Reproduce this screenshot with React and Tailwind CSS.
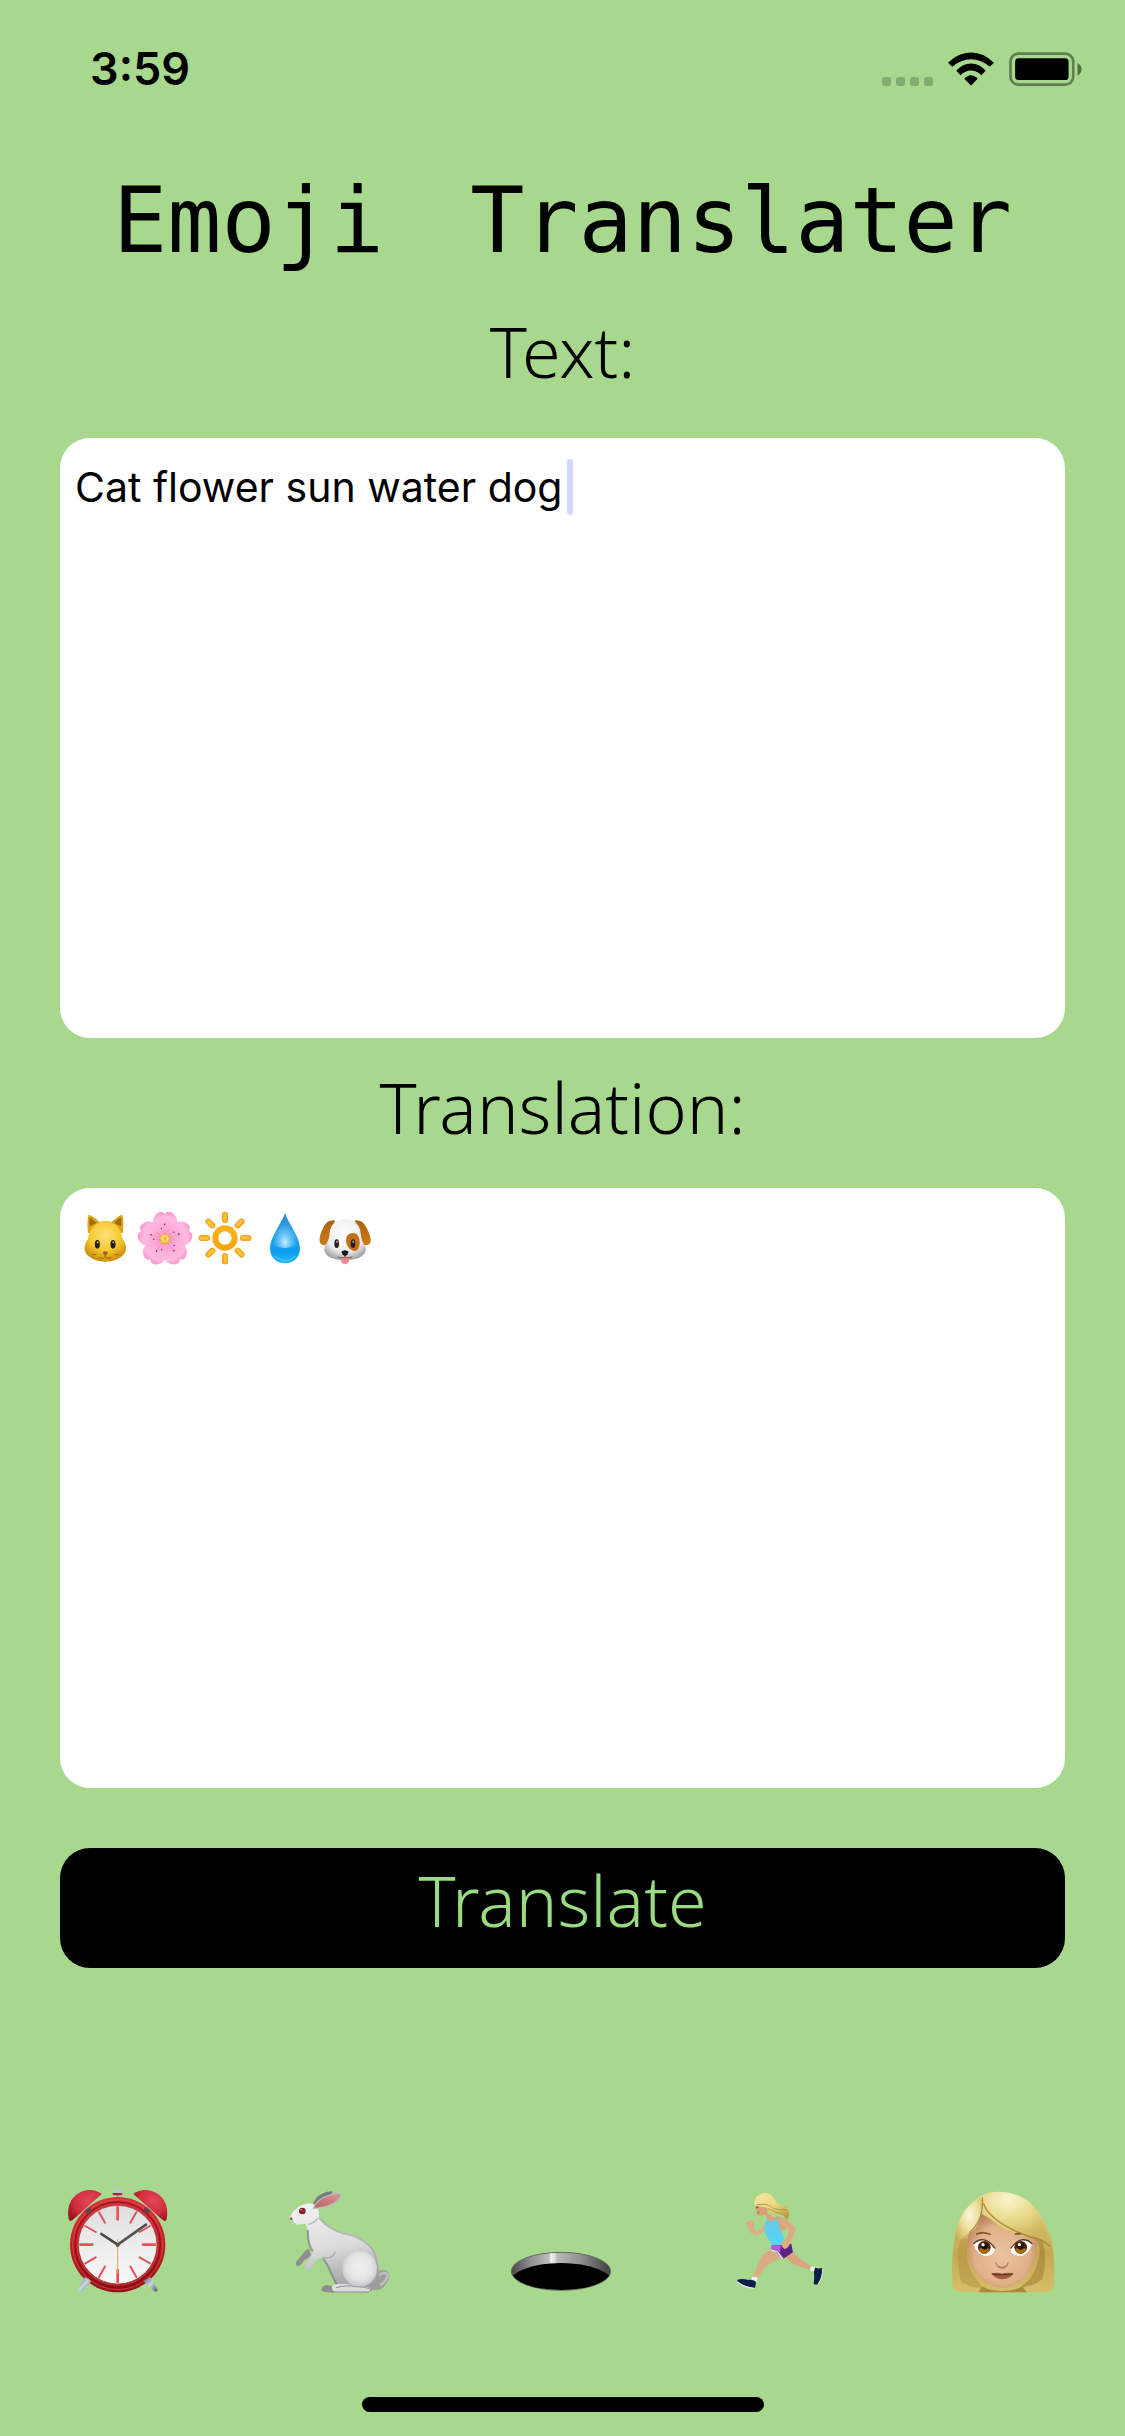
import React, { useState } from "react";

/* ---------- Status bar icons ---------- */

function SignalDots() {
  return (
    <svg viewBox="0 0 51 9" className="mt-6 h-[9px] w-[51px]" aria-hidden="true">
      {[0, 14, 28, 42].map((x) => (
        <rect key={x} x={x} width="9" height="9" rx="2.5" fill="#000" opacity="0.2" />
      ))}
    </svg>
  );
}

function Wifi() {
  return (
    <svg viewBox="264 65 138 101" className="h-[34px] w-[46px]" aria-hidden="true">
      <path d="M264 97 Q295 66 333 66 Q371 66 402 97 L389 109 Q364 86 333 86 Q302 86 277 109 Z" />
      <path d="M289 121 Q308 99 333 99 Q358 99 377 121 L364 134 Q350 120 333 120 Q316 120 302 134 Z" />
      <path d="M313 145 Q322 134 333 134 Q344 134 353 145 L333 165 Z" />
    </svg>
  );
}

function Battery() {
  return (
    <svg viewBox="447 65 220 103" className="h-[34px] w-[73px]" aria-hidden="true">
      <rect x="451" y="70" width="190" height="94" rx="24" fill="none" stroke="#000" strokeOpacity="0.42" strokeWidth="8" />
      <rect x="465" y="84" width="162" height="66" rx="11" />
      <path d="M654 98 Q666 104 666 117 Q666 130 654 136 Z" opacity="0.5" />
    </svg>
  );
}

/* ---------- Translated emoji ---------- */

function CatFace() {
  return (
    <svg viewBox="43 53 180 180" className="size-[60px]" role="img" aria-label="cat">
      <defs>
        <radialGradient id="catFur" cx="0.5" cy="0.35" r="0.65">
          <stop offset="0" stopColor="#ffe277" />
          <stop offset="0.6" stopColor="#f6c62c" />
          <stop offset="1" stopColor="#c98d0c" />
        </radialGradient>
      </defs>
      <path d="M86 199 L74 206 M88 204 L79 213 M181 199 L193 206 M179 204 L188 213" stroke="#d8d4c8" strokeWidth="2" />
      <path d="M82 128 Q78 92 84 73 Q100 78 116 95 Q133 90 153 95 Q169 78 185 73 Q191 95 186 128 Z" fill="#dba515" />
      <path d="M87 108 Q84 92 88 81 Q98 88 108 98 Z M181 108 Q184 92 180 81 Q170 88 160 98 Z" fill="#a36c08" />
      <path d="M134 93 C163 93 183 117 186 146 C201 166 199 190 181 199 Q165 213 134 214 Q103 213 87 199 C69 190 67 166 82 146 C85 117 105 93 134 93 Z" fill="url(#catFur)" />
      <path d="M121 203 Q134 193 147 203 Q141 213 134 213 Q127 213 121 203 Z" fill="#dca317" />
      <path d="M134 194 V200 M117 202 Q128 207 134 200 Q140 207 151 202 M95 193 H106 M162 193 H173" fill="none" stroke="#956006" strokeWidth="2.5" strokeLinecap="round" />
      <path d="M126 186 Q134 180 142 186 Q140 194 134 196 Q128 194 126 186 Z" fill="#85653a" />
      <ellipse cx="110" cy="162" rx="7.5" ry="13" fill="#221b16" />
      <ellipse cx="157" cy="162" rx="7.5" ry="13" fill="#221b16" />
      <circle cx="111" cy="156" r="3" fill="#b7b2aa" />
      <circle cx="158" cy="156" r="3" fill="#b7b2aa" />
    </svg>
  );
}

function Blossom() {
  return (
    <svg viewBox="223 53 180 180" className="size-[60px]" role="img" aria-label="flower">
      <defs>
        <radialGradient id="petal" gradientUnits="userSpaceOnUse" cx="313" cy="146" r="82">
          <stop offset="0" stopColor="#f07fb0" />
          <stop offset="0.3" stopColor="#fda6d2" />
          <stop offset="0.8" stopColor="#ffbbe1" />
          <stop offset="1" stopColor="#f995c8" />
        </radialGradient>
      </defs>
      {[0, 72, 144, 216, 288].map((a) => (
        <g key={a} transform={`rotate(${a} 313 146)`}>
          <path
            d="M313 146 C284 127 268 96 283 76 Q292 63 305 65 L312 71 L320 65 Q334 63 343 76 C358 96 342 127 313 146 Z"
            fill="url(#petal)"
            stroke="#f79ccc"
            strokeWidth="1"
          />
          <path d="M313 138 L312 104 M307 138 L303 116 M319 138 L323 116" stroke="#e06da2" strokeWidth="1" />
          <circle cx="312" cy="102" r="2.5" fill="#96204f" />
          <circle cx="302" cy="114" r="2" fill="#96204f" />
        </g>
      ))}
      <circle cx="313" cy="146" r="16" fill="#e7b63b" />
      <circle cx="313" cy="145" r="11" fill="#fbe27c" />
      <path d="M305 139 L321 152 M321 139 L305 152 M313 135 V156" stroke="#d69e2a" strokeWidth="2" />
    </svg>
  );
}

function Sun() {
  return (
    <svg viewBox="403 53 180 180" className="size-[60px]" role="img" aria-label="sun">
      <defs>
        <linearGradient id="sunRing" x1="0" y1="0" x2="0" y2="1">
          <stop offset="0" stopColor="#ffb217" />
          <stop offset="1" stopColor="#f6a50c" />
        </linearGradient>
      </defs>
      {[0, 45, 90, 135, 180, 225, 270, 315].map((a) => (
        <g key={a} transform={`rotate(${a} 493 143)`}>
          <rect x="484" y="64" width="18" height="34" rx="8" fill="#f7a021" />
          <rect x="488" y="68" width="9" height="27" rx="4" fill="#ffc530" />
        </g>
      ))}
      <circle cx="493" cy="143" r="29" fill="#fff" stroke="url(#sunRing)" strokeWidth="18" />
    </svg>
  );
}

function Droplet() {
  return (
    <svg viewBox="583 53 180 180" className="size-[60px]" role="img" aria-label="water">
      <defs>
        <linearGradient id="dropBody" x1="0" y1="0" x2="0" y2="1">
          <stop offset="0" stopColor="#2586c4" />
          <stop offset="0.4" stopColor="#36a9ea" />
          <stop offset="0.75" stopColor="#0b9cf0" />
          <stop offset="1" stopColor="#21b8f8" />
        </linearGradient>
        <radialGradient id="dropGlow" cx="0.5" cy="0.8" r="0.6">
          <stop offset="0" stopColor="#d4f3ff" stopOpacity="0.95" />
          <stop offset="1" stopColor="#6ccbf8" stopOpacity="0" />
        </radialGradient>
      </defs>
      <path d="M673 68 C679 92 718 139 718 174 C718 202 698 219 673 219 C648 219 628 202 628 174 C628 139 667 92 673 68 Z" fill="url(#dropBody)" />
      <path d="M673 84 C680 108 705 136 706 164 Q690 174 673 174 Q656 174 640 164 C641 136 666 108 673 84 Z" fill="url(#dropGlow)" />
      <path d="M642 197 Q658 211 673 211 Q688 211 704 197" fill="none" stroke="#59d3ff" strokeWidth="4" opacity="0.7" />
    </svg>
  );
}

function DogFace() {
  return (
    <svg viewBox="763 53 180 180" className="size-[60px]" role="img" aria-label="dog">
      <defs>
        <radialGradient id="dogFur" cx="0.5" cy="0.35" r="0.65">
          <stop offset="0" stopColor="#ffffff" />
          <stop offset="0.7" stopColor="#ececec" />
          <stop offset="1" stopColor="#a9a8a8" />
        </radialGradient>
        <linearGradient id="dogEar" x1="0" y1="0" x2="0" y2="1">
          <stop offset="0" stopColor="#a9610d" />
          <stop offset="1" stopColor="#cf7d17" />
        </linearGradient>
      </defs>
      <path d="M822 90 Q800 88 790 108 Q774 138 777 155 Q780 165 795 165 Q812 158 820 118 Z" fill="url(#dogEar)" />
      <path d="M883 90 Q905 88 915 108 Q932 138 930 155 Q926 165 912 165 Q893 158 886 118 Z" fill="url(#dogEar)" />
      <path d="M853 87 C884 87 899 104 901 136 C903 158 917 164 915 181 Q907 209 853 209 Q799 209 791 181 C789 164 803 158 806 136 C808 104 822 87 853 87 Z" fill="url(#dogFur)" />
      <path d="M875 128 C891 127 898 142 897 161 C896 175 888 183 880 182 C866 179 856 163 856 151 C856 137 864 129 875 128 Z" fill="#c27016" />
      <ellipse cx="828" cy="160" rx="7" ry="13" fill="#26201f" />
      <ellipse cx="877" cy="160" rx="7" ry="13" fill="#26201f" />
      <circle cx="829" cy="154" r="3" fill="#b3b0ae" />
      <circle cx="878" cy="154" r="3" fill="#b3b0ae" />
      <path d="M840 203 Q853 198 866 203 Q867 221 853 222 Q839 221 840 203 Z" fill="#f48c98" />
      <path d="M853 203 V215" stroke="#d86878" strokeWidth="2" />
      <path d="M853 192 V200 M832 200 Q846 206 853 199 Q860 206 874 200" fill="none" stroke="#6b5a55" strokeWidth="3" strokeLinecap="round" />
      <path d="M842 184 Q853 175 864 184 Q862 194 853 197 Q844 194 842 184 Z" fill="#151212" />
    </svg>
  );
}

/* ---------- Bottom row emoji ---------- */

function AlarmClock() {
  return (
    <svg viewBox="30 45 342 342" className="size-[114px]" aria-hidden="true">
      <defs>
        <radialGradient id="bell" cx="0.6" cy="0.35" r="0.7">
          <stop offset="0" stopColor="#e4485a" />
          <stop offset="0.6" stopColor="#d02c3c" />
          <stop offset="1" stopColor="#a01520" />
        </radialGradient>
        <linearGradient id="rim" x1="0" y1="0" x2="0" y2="1">
          <stop offset="0" stopColor="#d8343c" />
          <stop offset="0.5" stopColor="#c21f26" />
          <stop offset="1" stopColor="#8f1216" />
        </linearGradient>
        <linearGradient id="dial" x1="0" y1="0" x2="0" y2="1">
          <stop offset="0" stopColor="#dedede" />
          <stop offset="0.5" stopColor="#ececec" />
          <stop offset="1" stopColor="#f8f8f8" />
        </linearGradient>
        <linearGradient id="steel" x1="0" y1="0" x2="1" y2="1">
          <stop offset="0" stopColor="#585d66" />
          <stop offset="0.5" stopColor="#ccd5e4" />
          <stop offset="1" stopColor="#4c515b" />
        </linearGradient>
      </defs>
      <path d="M71 74 L84 70 L86 80 L76 84 Z M333 74 L320 70 L318 80 L328 84 Z" fill="#a9b9d3" />
      <path d="M203 72 V98" stroke="#9aa2b0" strokeWidth="5" />
      <rect x="188" y="66" width="29" height="10" rx="4" fill="#b3202c" />
      <rect x="184" y="60" width="37" height="9" rx="4" fill="#b9c4da" />
      <circle cx="203" cy="224" r="143" fill="url(#rim)" />
      <circle cx="203" cy="224" r="135" fill="none" stroke="#e5555a" strokeWidth="3" opacity="0.6" />
      <circle cx="203" cy="224" r="128" fill="none" stroke="#82090f" strokeWidth="4" opacity="0.7" />
      <circle cx="203" cy="224" r="121" fill="none" stroke="#d23a40" strokeWidth="4" opacity="0.8" />
      <circle cx="203" cy="224" r="118" fill="url(#dial)" stroke="#8f2e31" strokeWidth="2" />
      {[0, 30, 60, 90, 120, 150, 180, 210, 240, 270, 300, 330].map((a) => (
        <path
          key={a}
          d="M203 112 V148"
          transform={`rotate(${a} 203 224)`}
          stroke="#e8505a"
          strokeWidth={a % 90 === 0 ? 8 : 6}
          strokeLinecap="round"
        />
      ))}
      <path d="M203 206 V310" stroke="#dfae62" strokeWidth="3" />
      <path d="M203 224 L154 192" stroke="#444748" strokeWidth="8" strokeLinecap="round" />
      <path d="M203 224 L288 164" stroke="#505455" strokeWidth="8" strokeLinecap="round" />
      <circle cx="203" cy="225" r="6" fill="#5e5342" />
      <path d="M124 118 L108 126 M282 118 L298 126" stroke="#5e4550" strokeWidth="12" />
      <path d="M155 72 C125 49 83 61 64 91 Q50 116 56 147 Q58 157 68 150 Z" fill="url(#bell)" />
      <path d="M250 72 C280 49 322 61 342 91 Q356 116 350 147 Q348 157 338 150 Z" fill="url(#bell)" />
      <path d="M105 320 L124 334 L94 364 Q86 368 83 359 Z" fill="url(#steel)" />
      <path d="M300 320 L281 334 L312 363 Q320 369 323 359 Z" fill="url(#steel)" />
    </svg>
  );
}

function Rabbit() {
  return (
    <svg viewBox="694 45 342 342" className="size-[114px]" aria-hidden="true">
      <defs>
        <linearGradient id="rabbitFur" x1="0.3" y1="0" x2="0.5" y2="1">
          <stop offset="0" stopColor="#f1f1f1" />
          <stop offset="0.5" stopColor="#dcdcdd" />
          <stop offset="1" stopColor="#9c9c9e" />
        </linearGradient>
        <radialGradient id="rabbitThigh" cx="0.5" cy="0.45" r="0.6">
          <stop offset="0" stopColor="#f2f2f2" />
          <stop offset="0.6" stopColor="#e4e4e5" />
          <stop offset="1" stopColor="#c0c0c3" />
        </radialGradient>
        <linearGradient id="rabbitEar" x1="0" y1="1" x2="1" y2="0">
          <stop offset="0" stopColor="#b6656b" />
          <stop offset="1" stopColor="#dc9293" />
        </linearGradient>
      </defs>
      <path d="M789 108 Q794 82 820 70 Q837 62 849 64 Q848 76 826 92 Z" fill="#777a7c" />
      <path d="M984 305 Q1002 293 1016 305 Q1024 321 1009 343 Q992 365 968 360 Q955 355 970 335 Z" fill="#9d9d9f" />
      <path d="M990 315 Q1004 303 1014 314 Q1011 333 994 344" fill="none" stroke="#ccc" strokeWidth="8" strokeLinecap="round" opacity="0.7" />
      <path d="M778 236 Q767 239 759 252 L739 276 Q736 287 746 289 Q754 287 763 271 L785 258 Z" fill="#8f8f91" />
      <path d="M829 345 Q813 349 816 362 Q820 368 855 367 L860 350 Z" fill="#8d8d8f" />
      <path d="M721 142 C731 117 755 99 786 101 Q804 104 807 122 L808 143 C829 166 852 181 881 188 C928 196 965 220 978 252 C992 289 991 331 974 355 L960 367 L852 366 Q841 357 852 345 L860 342 C845 318 839 289 819 265 C804 260 795 274 788 290 Q780 302 768 297 Q762 289 772 276 L789 245 C776 226 776 205 774 186 Q773 169 766 162 L739 164 Q723 160 721 142 Z" fill="url(#rabbitFur)" />
      <path d="M774 180 C776 207 776 228 790 244 M820 266 C841 289 845 319 861 343" fill="none" stroke="#6e6e71" strokeWidth="6" opacity="0.6" />
      <path d="M819 263 Q850 268 857 245" fill="none" stroke="#a8a8aa" strokeWidth="4" />
      <path d="M775 163 Q791 162 806 144" fill="none" stroke="#bababd" strokeWidth="5" />
      <path d="M810 146 C829 168 852 183 881 190 C928 198 963 222 976 254 C988 289 988 331 972 354" fill="none" stroke="#9b9b9e" strokeWidth="5" opacity="0.6" />
      <ellipse cx="930" cy="296" rx="52" ry="54" fill="url(#rabbitThigh)" />
      <path d="M850 344 Q883 337 918 348 Q949 348 961 354 L959 367 H854 Q841 357 850 344 Z" fill="#dcdcde" />
      <path d="M859 353 Q893 344 918 350 Q944 350 959 356" fill="none" stroke="#929295" strokeWidth="3" />
      <path d="M844 366 H958" stroke="#8c8c90" strokeWidth="3" />
      <path d="M789 117 C795 91 825 71 872 69 Q880 76 868 91 C850 108 818 117 789 117 Z" fill="#bdb8ba" />
      <path d="M794 113 C802 91 832 74 870 72 Q875 79 862 90 C844 106 816 112 794 113 Z" fill="url(#rabbitEar)" />
      <circle cx="758" cy="123" r="10" fill="#6b2424" />
      <circle cx="759" cy="122" r="6" fill="#a92a2a" />
      <circle cx="754" cy="118" r="2" fill="#fff" />
      <path d="M720 144 Q722 153 729 151 L727 142 Z" fill="#8e5158" />
      <path d="M729 151 Q728 161 740 163" fill="none" stroke="#999" strokeWidth="2" />
    </svg>
  );
}

function Hole() {
  return (
    <svg viewBox="38 45 342 342" className="size-[114px]" aria-hidden="true">
      <defs>
        <linearGradient id="holeWall" x1="0" y1="0" x2="1" y2="0">
          <stop offset="0" stopColor="#484848" />
          <stop offset="0.2" stopColor="#929292" />
          <stop offset="0.38" stopColor="#bdbdbd" />
          <stop offset="0.4" stopColor="#f1f1f1" />
          <stop offset="0.44" stopColor="#dcdcdc" />
          <stop offset="0.46" stopColor="#b9b9b9" />
          <stop offset="0.7" stopColor="#909090" />
          <stop offset="1" stopColor="#3d3d3d" />
        </linearGradient>
        <clipPath id="holeEdge">
          <ellipse cx="212" cy="304" rx="148" ry="56" />
        </clipPath>
      </defs>
      <ellipse cx="212" cy="304" rx="149" ry="57" fill="url(#holeWall)" stroke="#646b60" strokeWidth="3" />
      <ellipse cx="212" cy="342" rx="158" ry="63" fill="#000" clipPath="url(#holeEdge)" />
    </svg>
  );
}

function Runner() {
  return (
    <svg viewBox="701 45 342 342" className="size-[114px]" aria-hidden="true">
      <defs>
        <linearGradient id="runnerHair" x1="0" y1="0" x2="1" y2="1">
          <stop offset="0" stopColor="#f7e9a0" />
          <stop offset="0.5" stopColor="#ecd883" />
          <stop offset="1" stopColor="#b18b36" />
        </linearGradient>
        <linearGradient id="runnerSkin" x1="0" y1="0" x2="0" y2="1">
          <stop offset="0" stopColor="#dba880" />
          <stop offset="1" stopColor="#dfae85" />
        </linearGradient>
        <linearGradient id="runnerTop" x1="0" y1="0" x2="0" y2="1">
          <stop offset="0" stopColor="#66c9e6" />
          <stop offset="1" stopColor="#55d5f6" />
        </linearGradient>
      </defs>
      <path d="M885 258 L912 250 Q927 268 963 289 L969 300 Q929 292 907 282 Q893 272 885 258 Z" fill="#d9a57c" />
      <path d="M840 239 Q813 252 803 282 Q797 302 785 323 L800 328 Q816 306 823 291 Q845 279 872 261 Z" fill="url(#runnerSkin)" />
      <path d="M959 292 L974 289 L973 304 L962 304 Z M785 320 L802 322 L799 336 L784 332 Z" fill="#f4eff0" />
      <path d="M974 293 Q984 297 997 294 Q997 320 982 344 L970 343 Q973 326 971 306 Z" fill="#0c1d4c" />
      <path d="M997 295 Q998 323 982 344" fill="none" stroke="#e8e8ef" strokeWidth="3" />
      <path d="M741 329 Q756 325 774 330 Q787 327 797 336 L794 355 Q762 351 741 337 Z" fill="#0c1d4c" />
      <path d="M740 335 Q762 353 793 355" fill="none" stroke="#e8e8ef" strokeWidth="4" />
      <path d="M830 150 Q818 178 801 185 Q791 180 788 173 Q795 159 788 153 Q780 148 770 156 Q766 165 773 176 Q786 198 798 197 Q817 190 832 174 Z" fill="url(#runnerSkin)" />
      <path d="M829 124 L850 142 L863 139 Q900 148 887 176 L875 183 L832 152 Q830 140 826 137 Z" fill="#d9a57c" />
      <path d="M832 142 L828 151 Q818 174 825 191 L845 224 H886 Q881 204 874 187 Q858 158 864 141 Q854 159 830 151 Z" fill="url(#runnerTop)" />
      <path d="M845 225 H879 L903 221 Q906 237 908 247 L877 268 L863 251 L841 238 Z" fill="#632085" />
      <path d="M844 225 L872 226 L869 247 L842 236 Z" fill="#b05ce2" />
      <path d="M841 239 L862 246 L878 267" fill="none" stroke="#eadff2" strokeWidth="4" />
      <path d="M868 143 Q884 142 912 169 Q918 178 911 195 L899 220 Q894 236 882 237 Q871 229 873 217 L890 204 L896 178 L874 164 Q863 153 868 143 Z" fill="url(#runnerSkin)" />
      <path d="M795 107 L798 120 Q797 133 806 136 Q818 139 826 132 L834 115 L804 104 Z" fill="#d7a175" />
      <path d="M797 114 L804 112" stroke="#503522" strokeWidth="3" />
      <path d="M801 128 L808 129" stroke="#a75045" strokeWidth="2.5" />
      <path d="M792 107 C790 80 809 66 830 70 C847 74 852 86 858 97 Q867 105 876 99 Q874 107 870 110 Q884 111 891 108 Q885 116 893 120 Q901 132 889 151 Q882 132 861 133 Q841 132 829 113 Q806 112 792 101 Z" fill="url(#runnerHair)" />
      <path d="M800 104 Q834 99 849 115 Q867 121 891 119 M833 116 Q857 129 881 132" fill="none" stroke="#ba983e" strokeWidth="3" />
    </svg>
  );
}

function Woman() {
  return (
    <svg viewBox="45 45 342 342" className="size-[114px]" aria-hidden="true">
      <defs>
        <linearGradient id="hairBack" x1="0" y1="0" x2="0" y2="1">
          <stop offset="0" stopColor="#eee2a2" />
          <stop offset="0.6" stopColor="#c5a850" />
          <stop offset="1" stopColor="#d7bf68" />
        </linearGradient>
        <radialGradient id="face" cx="0.5" cy="0.55" r="0.6">
          <stop offset="0" stopColor="#eac3a1" />
          <stop offset="0.65" stopColor="#e0b189" />
          <stop offset="1" stopColor="#b97d54" />
        </radialGradient>
        <radialGradient id="fringe" cx="0.4" cy="0.15" r="0.8">
          <stop offset="0" stopColor="#faf4cf" />
          <stop offset="0.5" stopColor="#e9da8b" />
          <stop offset="1" stopColor="#cdb45a" />
        </radialGradient>
        <radialGradient id="lock" cx="0.55" cy="0.35" r="0.65">
          <stop offset="0" stopColor="#fbf7dd" />
          <stop offset="0.5" stopColor="#ebdd95" />
          <stop offset="1" stopColor="#c8ae55" />
        </radialGradient>
      </defs>
      <path d="M156 76 C205 56 264 66 303 101 C338 133 357 177 366 220 C374 260 374 310 371 347 Q369 365 349 366 Q216 370 86 365 Q68 363 67 344 C64 287 69 203 86 158 C102 119 126 92 156 76 Z" fill="url(#hairBack)" />
      <path d="M125 204 Q99 243 120 296 Q137 337 169 354 Q130 357 93 336 Q78 261 89 208 Z" fill="#a98739" opacity="0.4" />
      <path d="M317 204 Q340 241 318 292 Q303 334 267 353 Q310 351 337 328 Q354 262 338 214 Z" fill="#957329" opacity="0.45" />
      <path d="M155 350 Q216 376 278 350 L291 367 H145 Z" fill="#ad8940" />
      <path d="M155 132 Q111 177 112 221 Q108 262 134 302 Q169 352 217 354 Q266 351 299 303 Q326 260 321 204 Q237 181 155 132 Z" fill="url(#face)" />
      <path d="M153 82 Q93 113 78 184 Q71 214 74 233 Q91 199 124 187 Q154 165 159 99 Z" fill="url(#lock)" />
      <path d="M156 76 C211 52 280 71 314 113 C339 145 351 186 355 217 Q331 204 301 201 C246 192 187 170 160 113 Q151 92 156 76 Z" fill="url(#fringe)" />
      <path d="M160 100 Q180 158 301 201 Q340 207 360 229 M157 82 Q162 151 118 188" fill="none" stroke="#a48036" strokeWidth="4" opacity="0.85" />
      <path d="M138 193 Q156 181 182 193 Q158 185 138 193 Z M254 193 Q262 186 272 192 Z" fill="#825326" stroke="#825326" strokeWidth="3" strokeLinejoin="round" />
      <path d="M130 222 Q161 191 195 237 Q194 257 166 258 Q141 254 130 222 Z" fill="#fff" />
      <path d="M307 222 Q276 191 242 237 Q243 257 271 258 Q297 254 307 222 Z" fill="#fff" />
      <circle cx="163" cy="232" r="19" fill="#4b240b" />
      <path d="M146 238 Q163 226 180 238 Q175 251 163 251 Q151 251 146 238 Z" fill="#a76a0d" />
      <circle cx="164" cy="229" r="10" fill="#210d06" />
      <circle cx="159" cy="224" r="5" fill="#fff" />
      <circle cx="272" cy="232" r="19" fill="#4b240b" />
      <path d="M255 238 Q272 226 289 238 Q284 251 272 251 Q260 251 255 238 Z" fill="#a76a0d" />
      <circle cx="272" cy="229" r="10" fill="#210d06" />
      <circle cx="268" cy="224" r="5" fill="#fff" />
      <path d="M130 222 Q162 191 195 235 M307 222 Q275 191 242 235" fill="none" stroke="#5b3721" strokeWidth="4" />
      <path d="M198 279 Q203 293 216 294 Q230 293 234 279" fill="none" stroke="#b98360" strokeWidth="4" strokeLinecap="round" />
      <path d="M205 289 Q216 298 227 289" fill="none" stroke="#a87350" strokeWidth="3" />
      <path d="M185 311 Q201 306 216 311 Q232 306 250 311 Q241 325 217 328 Q194 325 185 311 Z" fill="#a25b3c" />
      <path d="M185 311 Q201 316 216 314 Q235 316 250 311" fill="none" stroke="#5f2d1c" strokeWidth="3" />
    </svg>
  );
}

const SHORTCUTS = [
  { label: "Alarm clock", Icon: AlarmClock },
  { label: "Rabbit", Icon: Rabbit },
  { label: "Hole", Icon: Hole },
  { label: "Woman running", Icon: Runner },
  { label: "Woman", Icon: Woman },
];

export default function App() {
  const [text, setText] = useState("Cat flower sun water dog ");

  return (
    <div className="flex min-h-screen flex-col bg-[#a7d88d] text-black">
      <header className="flex h-[138px] items-center justify-between pr-[43px] pl-[90px]">
        <time className="font-['Inter',sans-serif] text-[45px] font-semibold">3:59</time>
        <div className="flex items-center gap-[15px]">
          <SignalDots />
          <Wifi />
          <Battery />
        </div>
      </header>

      <main className="flex grow flex-col px-[60px]">
        <h1 className="mt-[30px] text-center font-['DejaVu_Sans_Mono',monospace] text-[90px] leading-[106px] whitespace-nowrap">
          Emoji<span className="ml-8"> Translater</span>
        </h1>

        <label
          htmlFor="source"
          className="mt-6 block h-[140px] pt-1 text-center font-['Noto_Sans','Open_Sans',sans-serif] text-[70px] leading-[98px] font-light"
        >
          Text:
        </label>
        <div className="relative">
          <textarea
            id="source"
            value={text}
            onChange={(e) => setText(e.target.value)}
            spellCheck={false}
            className="block h-[600px] w-full resize-none rounded-[30px] bg-white px-[15px] py-6 font-['Inter',sans-serif] text-[41px] leading-[50px] outline-none"
          />
          <span className="absolute top-[21px] left-[507px] h-14 w-1.5 rounded-full bg-[#d0daff]" />
        </div>

        <label
          htmlFor="result"
          className="block h-[150px] pt-5 text-center font-['Noto_Sans','Open_Sans',sans-serif] text-[70px] leading-[98px] font-light"
        >
          Translation:
        </label>
        <output id="result" className="flex h-[600px] items-start rounded-[30px] bg-white px-[15px] py-5">
          <CatFace />
          <Blossom />
          <Sun />
          <Droplet />
          <DogFace />
        </output>

        <button
          type="button"
          className="mt-[60px] h-[120px] rounded-[30px] bg-black pb-4 font-['Noto_Sans','Open_Sans',sans-serif] text-[70px] leading-[98px] font-light text-[#98db80]"
        >
          Translate
        </button>

        <nav className="mt-[217px] flex justify-between pr-1.5" aria-label="Emoji">
          {SHORTCUTS.map(({ label, Icon }) => (
            <button key={label} type="button" aria-label={label}>
              <Icon />
            </button>
          ))}
        </nav>
      </main>

      <footer className="flex justify-center pb-6">
        <div className="h-[15px] w-[402px] rounded-full bg-black" />
      </footer>
    </div>
  );
}
